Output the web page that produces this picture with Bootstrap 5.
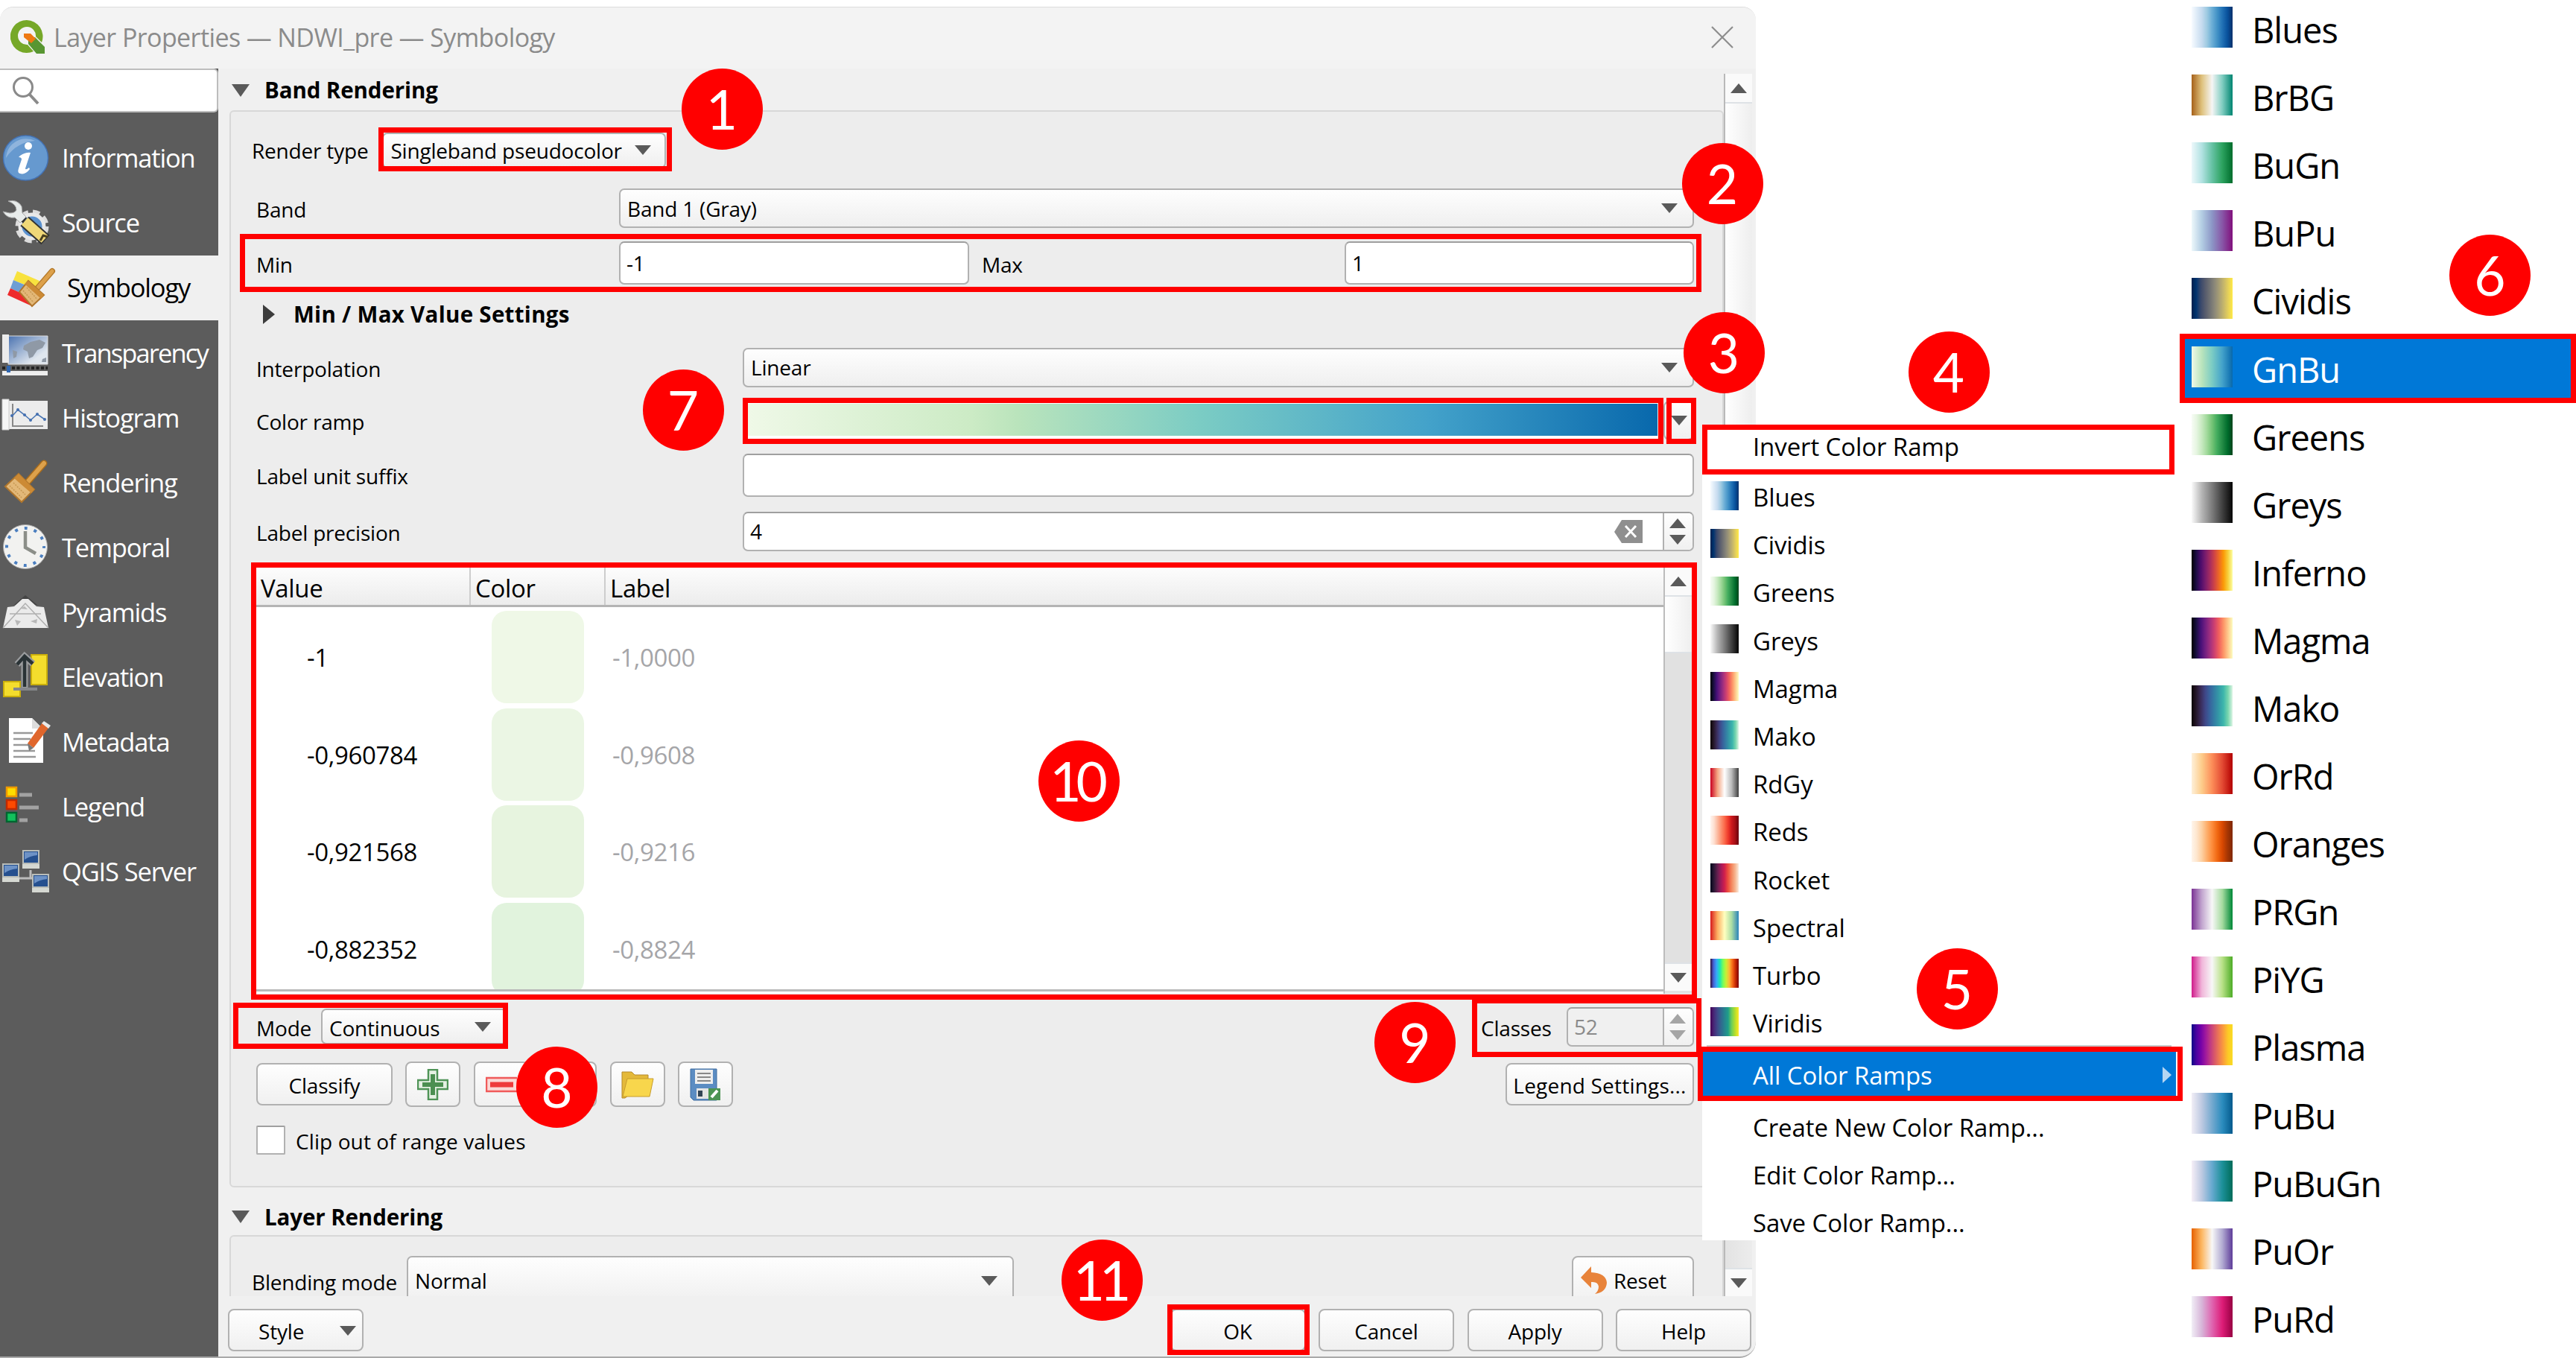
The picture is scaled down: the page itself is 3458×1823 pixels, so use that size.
<!DOCTYPE html>
<html lang="en">
<head>
<meta charset="utf-8">
<title>Layer Properties — Symbology</title>
<link href="https://cdn.jsdelivr.net/npm/bootstrap@5.3.0/dist/css/bootstrap.min.css" rel="stylesheet">
<style>
body{width:3458px;height:1823px;overflow:hidden;background:#fff;color:#000;font:28px/1 "Open Sans","Noto Sans",sans-serif;letter-spacing:-.2px;white-space:nowrap}
svg{display:block;flex:none}
.win{width:2357px;height:1814px;margin-top:9px;background:#f0f0f0;border-radius:18px 18px 22px 0;border-top:1px solid #dcdcdc;border-bottom:2px solid #a9a9a9;overflow:hidden}
.titlebar{height:83px;background:#f3f3f3;padding:0 30px 2px 14px;font-size:34px;letter-spacing:-.6px;color:#8b8b8b}
.side{width:293px;background:#5c5c5c;flex:none}
.search{height:59px;background:#fff;border:2px solid #bdbdbd;border-left:0;border-radius:0 6px 6px 0;padding-left:16px;margin-bottom:18px}
.navi{height:87.1px;padding-left:3px;gap:18px;color:#fff;font-size:34.5px;letter-spacing:-1.15px}
.navi svg{overflow:visible}
.navi.on{background:#f0f0f0;color:#000;padding-left:10px}
.navi .tight{letter-spacing:-1.9px}
.pane{width:2021px;height:1648px;overflow:hidden;padding-left:15px;flex:none}
.ghead{font-size:29.5px;font-weight:700;letter-spacing:-.1px;padding-left:3px;gap:20px}
.gh1{height:56px;padding-top:2px}.gh2{height:64px;padding-top:15px}
.frame{background:#ededed;border:2px solid #d8d8d8;border-radius:6px;width:2006px}
.f1{height:1446px}.f2{height:140px}
.frow{padding:0 38px 0 34px}
.l1{width:487px;padding-top:3px}.l2{width:653px;padding-top:3px}
.ctl{border:2px solid #b1b1b1;border-radius:7px;background:linear-gradient(#fefefe,#efefef);padding:0 20px 0 9px}
.inp{border:2px solid #b1b1b1;border-top-color:#9f9f9f;border-radius:7px;background:#fff;padding-left:8px}
.tri{width:0;height:0;border:11px solid transparent;border-top:13px solid #5a5a5a;border-bottom:0;flex:none}
.tri.up{border:11px solid transparent;border-bottom:13px solid #5a5a5a;border-top:0}
.tri.dim{border-top-color:#a5a5a5}.tri.up.dim{border-top-color:transparent;border-bottom-color:#a5a5a5}
.ghead .tri{border-width:17px 12px 0}
.spin{width:40px;border-left:2px solid #b1b1b1;padding-right:2px;gap:9px;background:linear-gradient(#fefefe,#f0f0f0);border-radius:0 6px 6px 0}
.r1{height:103px;padding-left:28px}.r2{height:53px}.r3{height:94px}.r4{height:44px}.r5{height:98px}.r6{height:44px}.r7{height:103px}.r8{height:48px}.r10{height:86px;padding-top:2px}.r11{height:71px}.r12{height:78px}
.h48{height:48px}.h52{height:53px}.h58{height:58px}
.bld{font-size:29.5px;font-weight:700;letter-spacing:.3px}
.rtype{width:381px;padding-right:18px;margin-left:3px}
.ramp{width:1229px;height:52px;background:#fff;padding:4px 0 5px 0}
.rampfill{height:43px;background:linear-gradient(90deg,#f0f9e8 0,#ccebc5 25%,#bae4bc 30%,#7bccc4 50%,#43a2ca 75%,#0868ac 100%)}
.tbl{width:1928px;height:573px;margin:24px 0 0 34px;background:#fff;font-size:33px;letter-spacing:-.35px}
.thd{height:54px;background:linear-gradient(#fdfdfd,#ececec);border-bottom:3px solid #b4b4b4}
.thd>div{padding-left:6px;border-right:2px solid #cdcdcd;padding-top:6px}
.tbody{height:516px;overflow:hidden;border-bottom:3px solid #b9b9b9}
.trow{height:130.5px}
.trow>*{margin-top:5px}
.tv{width:316px;padding-left:68px;line-height:125px}
.tsw{width:124px;height:124px;border-radius:20px;flex:none}
.tl{padding-left:38px;line-height:125px;color:#a5a5a8}
.vbar{width:39px;background:#e1e1e1;border-left:2px solid #bcbcbc}
.vbar .tri{margin-right:2px}
.sb{height:38px;background:#fafafa}
.pbtn{border:2px solid #b1b1b1;border-radius:8px;background:linear-gradient(#fefefe,#f0f0f0);flex:none}
.lbtn{height:57px;padding-top:3px}
.tools{gap:17.5px}
.tool{width:74px;height:61px;display:flex;align-items:center;justify-content:center}
.outer{width:38px;background:linear-gradient(90deg,#e3e3e3,#ececec);border-left:2px solid #b9b9b9;height:1641px;margin-top:7px}
.thumb{background:linear-gradient(90deg,#fff,#eee)}
.foot{height:81px;padding:17px 6px 0 13px}
.fbtn{width:182px;height:57px;padding-top:2px}
.menu1{position:absolute;left:2285px;top:571px;width:636px;height:1094px;background:#fff;font-size:33px;letter-spacing:-.1px;list-style:none;padding:0;margin:0}
.mi{height:64.2px;padding-left:11px;gap:19px}
.mi i{width:38px;height:39px;flex:none}
.mi span{padding-top:5px}
.mt{padding-left:68px;height:64.2px}
.mfirst{height:57px}
.sep{height:2px;background:#c9c9c9;margin:0 6px 5px}
.msel{height:66px;background:#0078d7;color:#fff;margin-bottom:5px;padding-right:6px}
.menu2{width:532px;margin:-9px 0 0 569px;padding:0;list-style:none;font-size:47px;letter-spacing:-1px}
.m2{height:91.1px;padding-left:16px;gap:26px}
.m2 i{width:55px;height:55px;flex:none}
.m2 span{padding-top:8px}
.m2.on{background:#0078d7;color:#fff;background-clip:content-box;border:4px solid transparent;border-width:4px 4px 4px 0;padding-left:0}
.m2.on i{margin-left:16px}
.box{position:absolute;border:7px solid #f00}
.dot{position:absolute;width:109px;height:109px;border-radius:50%;background:#f00;color:#fff;font:73px/109px Lato,sans-serif;text-align:center;letter-spacing:0}
.dd{letter-spacing:-7px;padding-right:7px}
</style>
<script src="https://cdn.jsdelivr.net/npm/bootstrap@5.3.0/dist/js/bootstrap.bundle.min.js"></script>
</head>
<body class="position-relative d-flex align-items-start">

<div class="win d-flex flex-column flex-shrink-0">
  <div class="titlebar d-flex align-items-center">
    <svg width="46" height="46" viewBox="0 0 46 46"><path d="M22 0a22 22 0 1 0 9 42l-8-9a12 12 0 1 1 11-11l8 8A22 22 0 0 0 22 0z" fill="#76a828"/><path d="M24 23h9l13 13v9H35L24 32z" fill="#589632"/><path d="M18 18h9l7 7-5 5-1 1-10-8z" fill="#ee7913"/></svg>
    <span class="flex-grow-1 ps-2 ms-1">Layer Properties — NDWI_pre — Symbology</span>
    <svg width="30" height="30" viewBox="0 0 30 30" stroke="#8d8d8d" stroke-width="2.2"><path d="M1 1l28 28M29 1L1 29"/></svg>
  </div>
  <div class="d-flex flex-grow-1">
    <nav class="side">
      <div class="search d-flex align-items-center"><svg width="38" height="38" viewBox="0 0 38 38" fill="none" stroke="#8a8a8a" stroke-width="3"><circle cx="15" cy="14" r="12.5"/><path d="M23 23l12 13" stroke-width="4"/></svg></div>
      <div class="navi d-flex align-items-center">
        <svg width="62" height="62"><circle cx="31.500" cy="30" r="30" fill="#6699cf" stroke="#4473b5" stroke-width="1.500"/><path d="M5 30A27 27 0 0 1 44 7C28 8 14 16 5 30z" fill="#8fb4dd"/><circle cx="35" cy="14" r="5" fill="#fff"/><path d="M24 27q8-5 14-4l-7 21q0 3 5-1l1 2q-6 8-13 6-4-1-2-7l4-12q0-3-4-3z" fill="#fff"/></svg><span>Information</span></div>
      <div class="navi d-flex align-items-center">
        <svg width="62" height="62"><circle cx="40" cy="35" r="19" fill="none" stroke="#dcdcdc" stroke-width="7" stroke-dasharray="9 6"/><circle cx="40" cy="35" r="16" fill="#5b92cf" stroke="#e8e8e8" stroke-width="5"/><path d="M30 28l28 25" stroke="#333" stroke-width="17"/><path d="M30 28l27 24" stroke="#f0d878" stroke-width="13"/><path d="M51 54l4-7 6 2" fill="none" stroke="#4a4020" stroke-width="3"/><path d="M26 29l5-7" stroke="#333" stroke-width="5"/><path d="M8 1q12-3 18 7l1 9 5 5-8 8-7-7Q7 25 1 15l9 2q7 0 9-4 0-8-11-12z" fill="#e8eceb" stroke="#aaa"/></svg><span>Source</span></div>
      <div class="navi on d-flex align-items-center">
        <svg width="62" height="62"><path d="M13 8l30 13-4 12L8 20z" fill="#f8e23e"/><path d="M8 20l31 13-4 12L4 31z" fill="#6f9ed4"/><path d="M4 31l31 14-2 10L0 40z" fill="#ee2a2c"/><path d="M41 30L60 8" stroke="#b57a2a" stroke-width="8" stroke-linecap="round"/><path d="M41 30L60 8" stroke="#dda14b" stroke-width="5" stroke-linecap="round"/><path d="M28 21l21 19-16 15-17-19z" fill="#e3b878" stroke="#b0762c" stroke-width="2"/><path d="M28 21l21 19-4 5-22-20z" fill="#cc8a35"/><path d="M21 34l14 16M26 30l14 16" stroke="#c69752" stroke-width="1.500" stroke-dasharray="2 1.500"/></svg><span>Symbology</span></div>
      <div class="navi d-flex align-items-center">
        <svg width="62" height="62"><defs><linearGradient id="tg" x1="0" y1="0" x2="1" y2="1"><stop offset="0" stop-color="#4a72b0"/><stop offset=".75" stop-color="#dfe6ee"/></linearGradient></defs><path d="M8 8h53v38H8z" fill="url(#tg)" stroke="#ddd"/><path d="M0 6h9v38H0z" fill="#ececec"/><path d="M29 21l9-5 12-3 8 4-4 7-7 3-6 9-5 2-2-9-6-3zM14 27l6 2-1 7-4 2zM54 39l5-2v6h-6z" fill="#8f99a6"/><path d="M0 51h61" stroke="#222" stroke-width="4" stroke-dasharray="4 2.500"/><path d="M0 55h61v6H0z" fill="#eee"/><path d="M6 48h5v9H6z" fill="#2f66b0"/></svg><span class="tight">Transparency</span></div>
      <div class="navi d-flex align-items-center">
        <svg width="62" height="62"><path d="M6 8h55v38H6z" fill="#ececec"/><path d="M0 6h9v41H0z" fill="#f6f6f6" stroke="#ccc"/><path d="M14 12v30h41" fill="none" stroke="#888" stroke-width="2"/><path d="M13 29l8-9 9 7 8 7 9-8 10 7" fill="none" stroke="#4d78b4" stroke-width="1.600"/><g fill="#4570b0"><circle cx="13" cy="28" r="2"/><circle cx="21" cy="20" r="2"/><circle cx="30" cy="27" r="2"/><circle cx="38" cy="34" r="2"/><circle cx="47" cy="26" r="2"/><circle cx="57" cy="33" r="2"/></g></svg><span>Histogram</span></div>
      <div class="navi d-flex align-items-center">
        <svg width="62" height="62"><path d="M35 29L56 5" stroke="#a96c1c" stroke-width="9" stroke-linecap="round"/><path d="M35 29L56 5" stroke="#dda14b" stroke-width="6" stroke-linecap="round"/><path d="M22 19l21 21-17 17L4 36z" fill="#e3b878" stroke="#b0762c" stroke-width="2"/><path d="M22 19l21 21-4 5-23-20z" fill="#cc8a35"/><path d="M10 35l16 16M15 31l16 16" stroke="#c69752" stroke-width="1.500" stroke-dasharray="2 1.500"/></svg><span>Rendering</span></div>
      <div class="navi d-flex align-items-center">
        <svg width="62" height="62"><circle cx="31" cy="30" r="29.500" fill="#f2f2f0" stroke="#aaa"/><circle cx="31" cy="30" r="25" fill="none" stroke="#4b7fc0" stroke-width="4" stroke-dasharray="4 9.090" stroke-dashoffset="2"/><path d="M31 9v22l14 8" fill="none" stroke="#8b8e88" stroke-width="4.500"/></svg><span>Temporal</span></div>
      <div class="navi d-flex align-items-center">
        <svg width="62" height="62"><path d="M16 21L31 8l16 13z" fill="#444"/><path d="M1 52l6-28 9-1 11-10h8l11 10 10 1 6 28z" fill="#ebebeb"/><path d="M1 52l30-33 31 33M10 33h42" fill="none" stroke="#b0b0b0" stroke-width="1.500"/><path d="M17 41l8 2-5 6zM38 43l9-3-1 6zM24 26l6-3 4 4zM33 20l6 3" fill="#b8b8b8"/></svg><span>Pyramids</span></div>
      <div class="navi d-flex align-items-center">
        <svg width="62" height="62"><path d="M2 37h22v20H2zM39 1h21v40H39z" fill="#f4dd2d" stroke="#c9ae0c" stroke-width="2"/><path d="M15 47h32" stroke="#85878a" stroke-width="4"/><path d="M30 45V6M20 14L30 3l11 10" fill="none" stroke="#9a9c9e" stroke-width="9"/><path d="M30 44V5M20 14L30 3l11 10" fill="none" stroke="#2a3336" stroke-width="4.500"/></svg><span>Elevation</span></div>
      <div class="navi d-flex align-items-center">
        <svg width="62" height="62"><path d="M9-1h31l15 15v45H9z" fill="#fff"/><path d="M40-1v14h14z" fill="#ddd"/><path d="M15 19h26M15 27h23M15 35h22M15 43h29M15 51h30" stroke="#999" stroke-width="2.500"/><path d="M54 5l9 6-21 28-8-6z" fill="#e0662c"/><path d="M56 3l9 6-3 4-9-7z" fill="#e8e8e8"/><path d="M34 33l8 6-6 4z" fill="#777"/></svg><span>Metadata</span></div>
      <div class="navi d-flex align-items-center">
        <svg width="62" height="62" stroke-width="2.500"><path d="M6 5h13v12H6z" fill="#ffdd00" stroke="#ef9a00"/><path d="M6 22h13v12H6z" fill="#ff4a00" stroke="#c02a00"/><path d="M6 39h13v12H6z" fill="#13c15c" stroke="#006630"/><path d="M23 15h17M23 32h26M23 49h11" stroke="#a2a2a2" stroke-width="5"/></svg><span>Legend</span></div>
      <div class="navi d-flex align-items-center">
        <svg width="62" height="62"><path d="M38 28v11M22 39h18" stroke="#bbb" stroke-width="3"/><g id="mon"><path d="M1 20h21v17H1z" fill="#25508f" stroke="#b9bdb9" stroke-width="2"/><path d="M3 22h17v4Q10 27 3 32z" fill="#6d92c6"/><path d="M0 38h23v6H0z" fill="#d5d8d2"/></g><use href="#mon" x="27" y="-18"/><use href="#mon" x="40" y="14"/></svg><span>QGIS Server</span></div>
    </nav>

    <main class="d-flex flex-column flex-grow-1">
      <div class="d-flex">
        <div class="pane">
          <div class="ghead gh1 d-flex align-items-center"><i class="tri"></i>Band Rendering</div>
          <section class="frame f1">
            <div class="frow r1 d-flex align-items-center"><span class="pe-3">Render type</span>
              <div class="ctl rtype h48 d-flex align-items-center justify-content-between">Singleband pseudocolor<i class="tri"></i></div></div>
            <div class="frow r2 d-flex align-items-center"><span class="l1">Band</span><div class="ctl h52 flex-grow-1 d-flex align-items-center justify-content-between">Band 1 (Gray)<i class="tri"></i></div></div>
            <div class="frow r3 d-flex align-items-center"><span class="l1">Min</span><div class="inp h58 d-flex align-items-center" style="width:470px">-1</div><span class="l1" style="margin-left:17px">Max</span><div class="inp h58 flex-grow-1 d-flex align-items-center">1</div></div>
            <div class="frow r4 d-flex align-items-center bld"><svg width="18" height="27" class="ms-2" style="margin-right:24px"><path d="M1 0l16 13L1 26z" fill="#3c3c3c"/></svg>Min / Max Value Settings</div>
            <div class="frow r5 d-flex align-items-center"><span class="l2">Interpolation</span><div class="ctl h52 flex-grow-1 d-flex align-items-center justify-content-between">Linear<i class="tri"></i></div></div>
            <div class="frow r6 d-flex align-items-center"><span class="l2">Color ramp</span><div class="ramp"><div class="rampfill"></div></div><div class="pbtn h52 ms-2 d-flex align-items-center justify-content-center" style="width:41px"><i class="tri"></i></div></div>
            <div class="frow r7 d-flex align-items-center"><span class="l2">Label unit suffix</span><div class="inp h58 flex-grow-1"></div></div>
            <div class="frow r8 d-flex align-items-center"><span class="l2">Label precision</span><div class="inp h52 flex-grow-1 d-flex align-items-center">4<svg class="ms-auto" width="38" height="31" viewBox="0 0 38 31" style="margin-right:27px"><path d="M10 0h28v31H10L0 16z" fill="#8f8f8f"/><path d="M15 8l14 15M29 8L15 23" stroke="#fff" stroke-width="3"/></svg><div class="spin align-self-stretch d-flex flex-column align-items-center justify-content-center"><i class="tri up"></i><i class="tri"></i></div></div></div>

            <div class="tbl d-flex">
              <div class="flex-grow-1">
                <div class="thd d-flex align-items-stretch"><div class="d-flex align-items-center" style="width:288px">Value</div><div class="d-flex align-items-center" style="width:181px">Color</div><div class="d-flex align-items-center border-0">Label</div></div>
                <div class="tbody" id="rows"></div>
              </div>
              <div class="vbar d-flex flex-column"><div class="sb d-flex align-items-center justify-content-center"><i class="tri up"></i></div><div class="thumb border-bottom border-top border-2" style="height:78px"></div><div class="flex-grow-1"></div><div class="sb border-top border-2 d-flex align-items-center justify-content-center"><i class="tri"></i></div><div style="height:4px"></div></div>
            </div>

            <div class="frow r10 d-flex align-items-center"><span class="pt-1" style="width:87px">Mode</span><div class="ctl h48 d-flex align-items-center justify-content-between" style="width:250px"><span class="pt-1">Continuous</span><i class="tri me-n1"></i></div>
              <span class="ms-auto pt-1" style="width:115px">Classes</span><div class="inp h52 d-flex align-items-center" style="width:171px;background:#f0f0f0;color:#8a8a8a">52<div class="spin align-self-stretch ms-auto d-flex flex-column align-items-center justify-content-center"><i class="tri up dim"></i><i class="tri dim"></i></div></div></div>
            <div class="frow r11 d-flex align-items-center">
              <div class="pbtn lbtn d-flex align-items-center justify-content-center" style="width:183px;margin-right:17px">Classify</div>
              <div class="tools d-flex">
                <div class="pbtn tool"><svg width="42" height="42"><path d="M15 1h12v14h14v12H27v14H15V27H1V15h14z" fill="#e6f1e4" stroke="#4f9457" stroke-width="2.500"/><path d="M21 7v28M7 21h28" stroke="#4b8f51" stroke-width="6"/></svg></div>
                <div class="pbtn tool"><svg width="42" height="42"><path d="M1 12h42v18H1z" fill="#fbd9d6" stroke="#f05a5a" stroke-width="2.500"/><path d="M6 21h31" stroke="#ee3b3b" stroke-width="7"/></svg></div>
                <div class="pbtn tool"></div>
                <div class="pbtn tool"><svg width="44" height="40"><path d="M1 3h13l4 4h18v8L5 38H1z" fill="#e4b93a" stroke="#b5892a"/><path d="M8 12h35l-5 24H2z" fill="#f8d64c" stroke="#c79c2c"/></svg></div>
                <div class="pbtn tool"><svg width="44" height="46"><path d="M2 2h35v42H6l-4-4z" fill="#5b8cc2" stroke="#3e6ca0"/><path d="M8 3h24v19H8z" fill="#eee"/><path d="M11 8h18M11 13h18M11 18h18" stroke="#888" stroke-width="2"/><path d="M10 28h18v14H10z" fill="#e4e4e4"/><path d="M12 31h6v8h-6z" fill="#345"/><path d="M26 28h16v16H26z" fill="#4c9453"/><path d="M30 40l8-9" stroke="#fff" stroke-width="4"/></svg></div>
              </div>
              <div class="pbtn lbtn ms-auto d-flex align-items-center justify-content-center" style="width:253px;letter-spacing:.2px">Legend Settings...</div></div>
            <div class="frow r12 d-flex align-items-center"><span class="inp" style="width:39px;height:39px;border-radius:2px"></span><span style="padding:3px 0 0 14px;letter-spacing:.1px">Clip out of range values</span></div>
          </section>
          <div class="ghead gh2 d-flex align-items-center"><i class="tri"></i>Layer Rendering</div>
          <section class="frame f2">
            <div class="frow d-flex align-items-center" style="padding-left:28px;padding-top:26px"><span style="width:208px;padding-top:4px">Blending mode</span>
              <div class="ctl d-flex align-items-center justify-content-between" style="width:815px;height:66px">Normal<i class="tri"></i></div>
              <div class="pbtn ms-auto d-flex align-items-center" style="width:164px;height:66px;padding-left:10px"><svg width="36" height="38"><path d="M14 0L0 15l14 14v-8q9-1 10 6 0 6-5 10 15-2 16-15Q34 9 14 8z" fill="#e8833a"/></svg><span class="ps-2">Reset</span></div></div>
          </section>
        </div>
        <div class="outer d-flex flex-column"><div class="sb d-flex align-items-center justify-content-center"><i class="tri up"></i></div><div class="thumb border-top border-2" style="height:700px"></div><div class="flex-grow-1"></div><div class="sb border-top border-2 d-flex align-items-center justify-content-center"><i class="tri"></i></div></div>
      </div>
      <div class="foot d-flex">
        <div class="pbtn fbtn d-flex align-items-center" style="padding-left:39px">Style<i class="tri ms-auto" style="margin-right:8px"></i></div>
        <div class="tools d-flex ms-auto"><div class="pbtn fbtn d-flex align-items-center justify-content-center">OK</div><div class="pbtn fbtn d-flex align-items-center justify-content-center">Cancel</div><div class="pbtn fbtn d-flex align-items-center justify-content-center">Apply</div><div class="pbtn fbtn d-flex align-items-center justify-content-center">Help</div></div>
      </div>
    </main>
  </div>
</div>

<ul class="menu2" id="m2"></ul>

<ul class="menu1">
  <li class="mt mfirst d-flex align-items-center">Invert Color Ramp</li>
  <li style="height:5px"></li>
  <li><ul class="list-unstyled mb-0" id="m1"></ul></li>
  <li class="sep"></li>
  <li class="mt msel d-flex align-items-center justify-content-between">All Color Ramps<svg width="12" height="22"><path d="M0 0l12 11L0 22z" fill="#b5d6f3"/></svg></li>
  <li class="mt d-flex align-items-center">Create New Color Ramp...</li>
  <li class="mt d-flex align-items-center">Edit Color Ramp...</li>
  <li class="mt d-flex align-items-center">Save Color Ramp...</li>
</ul>

<div id="notes"></div>

<script>
const R={
 Blues:'#f7fbff,#deebf7,#c6dbef,#9ecae1,#6baed6,#4292c6,#2171b5,#08519c,#08306b',
 BrBG:'#a6611a,#dfc27d,#f5f5f5,#80cdc1,#018571',
 BuGn:'#edf8fb,#b2e2e2,#66c2a4,#2ca25f,#006d2c',
 BuPu:'#edf8fb,#b3cde3,#8c96c6,#8856a7,#810f7c',
 Cividis:'#00204d,#00336f,#39486b,#575c6d,#707173,#8a8779,#a69d75,#c4b56c,#e4cf5b,#ffea46',
 GnBu:'#f0f9e8,#bae4bc,#7bccc4,#43a2ca,#0868ac',
 Greens:'#f7fcf5,#e5f5e0,#c7e9c0,#a1d99b,#74c476,#41ab5d,#238b45,#006d2c,#00441b',
 Greys:'#fafafa,#b5b5b5,#7c7c7c,#404040,#050505',
 Inferno:'#000004,#1b0c42,#4b0c6b,#781c6d,#a52c60,#cf4446,#ed6925,#fb9a06,#f7d03c,#fcffa4',
 Magma:'#000004,#180f3e,#451077,#721f81,#9f2f7f,#cd4071,#f1605d,#fd9567,#feca8d,#fcfdbf',
 Mako:'#0b0405,#251729,#3a2c59,#3f4788,#38639d,#347fa4,#349ba7,#3db6ac,#78d6ae,#def5e5',
 OrRd:'#fef0d9,#fdcc8a,#fc8d59,#e34a33,#b30000',
 Oranges:'#fff5eb,#fee6ce,#fdd0a2,#fdae6b,#fd8d3c,#f16913,#d94801,#a63603,#7f2704',
 PRGn:'#7b3294,#c2a5cf,#f7f7f7,#a6dba0,#008837',
 PiYG:'#d01c8b,#f1b6da,#f7f7f7,#b8e186,#4dac26',
 Plasma:'#0d0887,#47039f,#7301a8,#9c179e,#bd3786,#d8576b,#ed7953,#fa9e3b,#fdc926,#f9dc24',
 PuBu:'#f1eef6,#bdc9e1,#74a9cf,#2b8cbe,#045a8d',
 PuBuGn:'#f6eff7,#bdc9e1,#67a9cf,#1c9099,#016c59',
 PuOr:'#e66101,#fdb863,#f7f7f7,#b2abd2,#5e3c99',
 PuRd:'#f1eef6,#d7b5d8,#df65b0,#dd1c77,#980043',
 RdGy:'#ca0020,#f4a582,#ffffff,#bababa,#404040',
 Reds:'#fff5f0,#fee0d2,#fcbba1,#fc9272,#fb6a4a,#ef3b2c,#cb181d,#a50f15,#67000d',
 Rocket:'#03051a,#2c1835,#641f4f,#a11a5b,#d11f4c,#ed503e,#f4875e,#f6b48f,#faebdd',
 Spectral:'#d7191c,#fdae61,#ffffbf,#abdda4,#2b83ba',
 Turbo:'#30123b,#4662d8,#35abf8,#1be5b5,#74fe5d,#c9ef34,#fbb938,#f56918,#c92903,#7a0403',
 Viridis:'#440154,#482878,#3e4a89,#31688e,#26838f,#1f9d8a,#6cce5a,#b6de2b,#fee825'};
const sw=n=>`<i style="background:linear-gradient(90deg,${R[n]})"></i><span>${n}</span>`;
m1.innerHTML='Blues Cividis Greens Greys Magma Mako RdGy Reds Rocket Spectral Turbo Viridis'.split(' ').map(n=>`<li class="mi d-flex align-items-center">${sw(n)}</li>`).join('');
m2.innerHTML='Blues BrBG BuGn BuPu Cividis GnBu Greens Greys Inferno Magma Mako OrRd Oranges PRGn PiYG Plasma PuBu PuBuGn PuOr PuRd'.split(' ').map(n=>`<li class="m2 d-flex align-items-center${n=='GnBu'?' on':''}">${sw(n)}</li>`).join('');
rows.innerHTML=[['-1','#eff8e7','-1,0000'],['-0,960784','#ebf6e4','-0,9608'],['-0,921568','#e7f4df','-0,9216'],['-0,882352','#e1f3dd','-0,8824']].map(r=>`<div class="trow d-flex align-items-start"><span class="tv">${r[0]}</span><span class="tsw" style="background:${r[1]}"></span><span class="tl">${r[2]}</span></div>`).join('');
const boxes=[[508,171,394,59],[322,314,1962,78],[997,534,1236,62],[2237,534,40,62],[2285,570,634,67],[337,755,1941,587],[313,1346,369,62],[1976,1340,308,79],[2279,1405,651,73],[1567,1751,191,68],[2926,448,532,93]];
const dots=[[969,146],[2312,246],[2314,473],[2616,499],[2627,1327],[3342.5,369],[917,550],[747.5,1459],[1899.5,1399],[1448,1048],[1479.5,1718]];
notes.innerHTML=boxes.map(b=>`<div class="box" style="left:${b[0]}px;top:${b[1]}px;width:${b[2]}px;height:${b[3]}px"></div>`).join('')+dots.map((d,i)=>`<div class="dot${i>8?' dd':''}" style="left:${d[0]-54.5}px;top:${d[1]-54.5}px">${i+1}</div>`).join('');
</script>
</body>
</html>
